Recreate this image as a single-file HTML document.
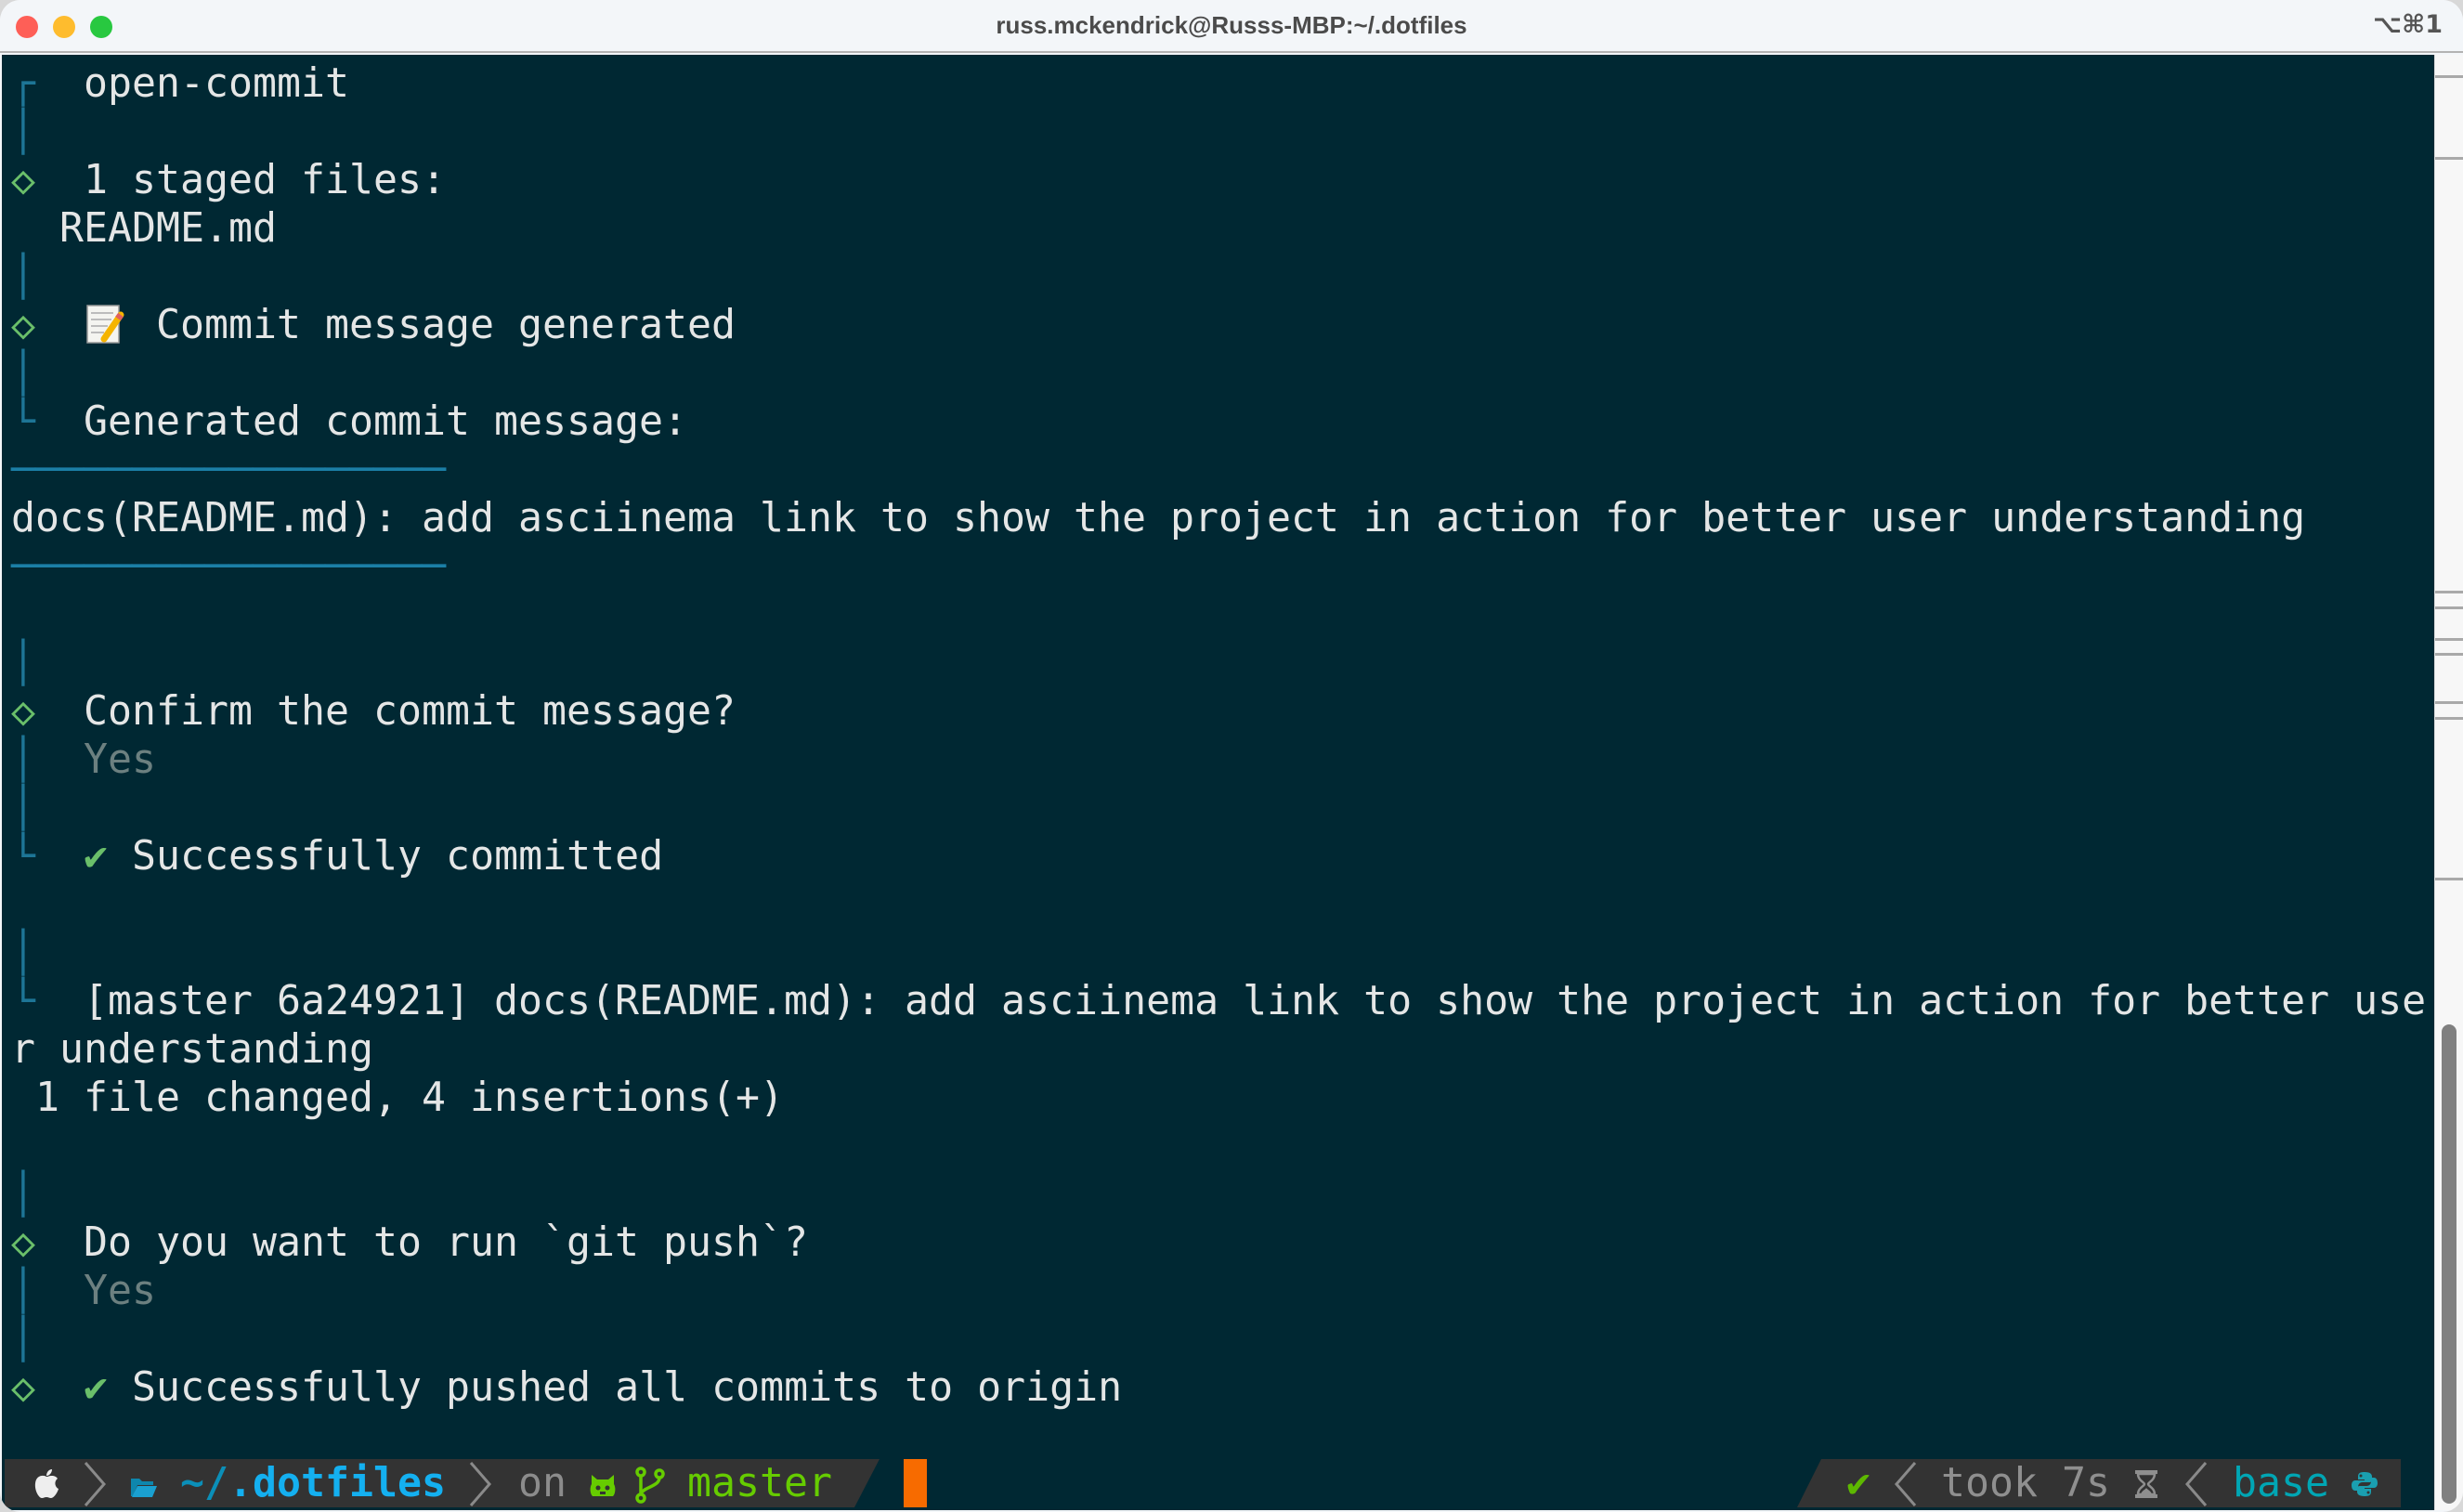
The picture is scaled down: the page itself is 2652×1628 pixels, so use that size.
<!DOCTYPE html>
<html><head><meta charset="utf-8">
<style>
*{margin:0;padding:0;box-sizing:border-box}
html,body{width:2652px;height:1628px;overflow:hidden;background:#d8d8d8}
#win{position:absolute;left:0;top:0;width:2652px;height:1628px;border-radius:22px;overflow:hidden;background:#f3f6f9}
#title{position:absolute;left:0;top:0;width:2652px;height:57px;background:#f3f6f9;border-bottom:2px solid #b3b3b3}
.tl{position:absolute;top:17px;width:24px;height:24px;border-radius:50%}
#ttext{position:absolute;left:0;width:2652px;top:12px;text-align:center;font:bold 26px "Liberation Sans",sans-serif;color:#4b4b4b}
#kbd{position:absolute;right:22px;top:11px;font:bold 27px "DejaVu Sans","Liberation Sans",sans-serif;color:#555}
#term{position:absolute;left:2px;top:59px;width:2619px;height:1567px;background:#002833}
#sb{position:absolute;left:2621px;top:59px;width:31px;height:1567px;background:#f7f7f7;border-left:1px solid #ddd}
.tick{position:absolute;left:2622px;width:30px;height:3px;background:#a9a9a9}
#thumb{position:absolute;left:2629px;top:1103px;width:16px;height:516px;border-radius:8px;background:#808080}
pre{position:absolute;left:12px;top:63.6px;font:43.2px/52px "DejaVu Sans Mono",monospace;color:#e4e6e6;white-space:pre}
.b{color:#1d7596}.g{color:#6abf6a}.y{color:#6c8080}.h{color:#1b7fa6}
.p{position:absolute;top:1571px;font:43.2px/52px "DejaVu Sans Mono",monospace;white-space:pre}
svg{position:absolute}
</style></head><body>
<div id="win">
<div id="title">
<div class="tl" style="left:17px;background:#fe5f57"></div>
<div class="tl" style="left:57px;background:#febc2e"></div>
<div class="tl" style="left:97px;background:#28c840"></div>
<div id="ttext">russ.mckendrick@Russs-MBP:~/.dotfiles</div>
<div id="kbd">⌥⌘1</div>
</div>
<div id="term"></div>
<div id="sb"></div>
<div class="tick" style="top:81px"></div><div class="tick" style="top:169px"></div>
<div class="tick" style="top:636px"></div><div class="tick" style="top:653px"></div>
<div class="tick" style="top:687px"></div><div class="tick" style="top:703px"></div>
<div class="tick" style="top:755px"></div><div class="tick" style="top:772px"></div>
<div class="tick" style="top:945px"></div>
<div id="thumb"></div>
<pre><span class="b">┌</span>  open-commit
<span class="b">│</span>
<span class="g">◇</span>  1 staged files:
  README.md
<span class="b">│</span>
<span class="g">◇</span>     Commit message generated
<span class="b">│</span>
<span class="b">└</span>  Generated commit message:
<span class="h">──────────────────</span>
docs(README.md): add asciinema link to show the project in action for better user understanding
<span class="h">──────────────────</span>

<span class="b">│</span>
<span class="g">◇</span>  Confirm the commit message?
<span class="b">│</span>  <span class="y">Yes</span>
<span class="b">│</span>
<span class="b">└</span>  <span class="g">✔</span> Successfully committed

<span class="b">│</span>
<span class="b">└</span>  [master 6a24921] docs(README.md): add asciinema link to show the project in action for better use
r understanding
 1 file changed, 4 insertions(+)

<span class="b">│</span>
<span class="g">◇</span>  Do you want to run `git push`?
<span class="b">│</span>  <span class="y">Yes</span>
<span class="b">│</span>
<span class="g">◇</span>  <span class="g">✔</span> Successfully pushed all commits to origin</pre>
<svg style="left:92px;top:327px" width="42" height="44" viewBox="0 0 42 44"><rect x="2" y="2" width="34" height="40" fill="#f4f4f0" stroke="#999" stroke-width="1.5"/><g stroke="#aaa" stroke-width="1.5"><line x1="6" y1="10" x2="30" y2="10"/><line x1="6" y1="17" x2="28" y2="17"/><line x1="6" y1="24" x2="24" y2="24"/><line x1="6" y1="31" x2="20" y2="31"/></g><line x1="38" y1="12" x2="20" y2="38" stroke="#f5b400" stroke-width="7" stroke-linecap="round"/><line x1="38" y1="12" x2="35" y2="16" stroke="#e06060" stroke-width="7"/></svg>
<svg style="left:5px;top:1571px" width="945" height="52"><polygon points="0,0 942,0 915,52 0,52" fill="#333"/></svg>
<div class="p" style="left:973px;width:25px;height:52px;background:#f76b00"></div>
<svg style="left:1935px;top:1571px" width="650" height="52"><polygon points="26,0 650,0 650,52 0,52" fill="#333"/></svg>
<svg style="left:34px;top:1579px" width="32" height="38" viewBox="0 0 32 38"><path d="M16 11c-3-2-11-2-12 7-1 8 4 16 7 16 2 0 3-1 5-1s3 1 5 1c3 0 7-6 8-10-4-2-5-8-1-11-2-3-5-3-7-3-2 0-3 1-5 1z" fill="#eee"/><path d="M16 10c0-4 3-7 6-7 0 4-3 7-6 7z" fill="#eee"/></svg>
<svg style="left:88px;top:1573px" width="30" height="50"><polyline points="4,2 24,25 4,48" fill="none" stroke="#8a8a8a" stroke-width="3"/></svg>
<svg style="left:140px;top:1589px" width="30" height="24" viewBox="0 0 30 24"><path d="M1 3h9l3 3h12v4H8L3 22H1z" fill="#0e86ad"/><path d="M8 11h21l-5 12H2z" fill="#1aa0d0"/></svg>
<div class="p" style="left:194px;color:#0b8fb8;font-weight:bold">~/</div>
<div class="p" style="left:246px;color:#14b0f0;font-weight:bold">.dotfiles</div>
<svg style="left:503px;top:1573px" width="30" height="50"><polyline points="4,2 24,25 4,48" fill="none" stroke="#8a8a8a" stroke-width="3"/></svg>
<div class="p" style="left:558px;color:#8c8c8c">on</div>
<svg style="left:634px;top:1586px" width="30" height="28" viewBox="0 0 30 28"><path d="M3 2l6 5h12l6-5v10c2 3 2 10-1 13H4C1 22 1 15 3 12z" fill="#66cc00"/><circle cx="10" cy="16" r="2.5" fill="#333"/><circle cx="20" cy="16" r="2.5" fill="#333"/><rect x="12" y="20" width="6" height="3" fill="#333"/></svg>
<svg style="left:683px;top:1579px" width="34" height="40" viewBox="0 0 34 40"><g fill="none" stroke="#66cc00" stroke-width="3.5"><circle cx="7" cy="6" r="4"/><circle cx="7" cy="34" r="4"/><circle cx="27" cy="8" r="4"/><line x1="7" y1="10" x2="7" y2="30"/><path d="M27 12c0 10-18 10-20 18"/></g></svg>
<div class="p" style="left:740px;color:#66cc00">master</div>
<div class="p" style="left:1988px;color:#5db800;font-weight:bold">✔</div>
<svg style="left:2036px;top:1573px" width="30" height="50"><polyline points="26,2 6,25 26,48" fill="none" stroke="#8a8a8a" stroke-width="3"/></svg>
<div class="p" style="left:2090px;color:#8f8f8f">took 7s</div>
<svg style="left:2298px;top:1583px" width="26" height="30" viewBox="0 0 26 30"><rect x="1" y="0" width="24" height="4" fill="#8f8f8f"/><rect x="1" y="26" width="24" height="4" fill="#8f8f8f"/><path d="M4 4h18c0 7-7 9-7 11s7 4 7 11H4c0-7 7-9 7-11S4 11 4 4z" fill="none" stroke="#8f8f8f" stroke-width="2.5"/><path d="M7 26c1-4 5-5 6-7 1 2 5 3 6 7z" fill="#8f8f8f"/></svg>
<svg style="left:2349px;top:1573px" width="30" height="50"><polyline points="26,2 6,25 26,48" fill="none" stroke="#8a8a8a" stroke-width="3"/></svg>
<div class="p" style="left:2404px;color:#00a6b4">base</div>
<svg style="left:2532px;top:1584px" width="28" height="28" viewBox="0 0 28 28"><path d="M14 1c-6 0-7 2-7 5v3h7v1H4c-3 0-4 3-4 5 0 3 1 6 4 6h3v-4c0-3 2-5 5-5h7c2 0 3-1 3-3V6c0-3-2-5-8-5z" fill="#1a9fb0"/><path d="M14 27c6 0 7-2 7-5v-3h-7v-1h10c3 0 4-3 4-5 0-3-1-6-4-6h-3v4c0 3-2 5-5 5H9c-2 0-3 1-3 3v3c0 3 2 5 8 5z" fill="#1a9fb0"/><circle cx="10" cy="5" r="1.5" fill="#333"/><circle cx="18" cy="23" r="1.5" fill="#333"/></svg>
</div>
</body></html>
